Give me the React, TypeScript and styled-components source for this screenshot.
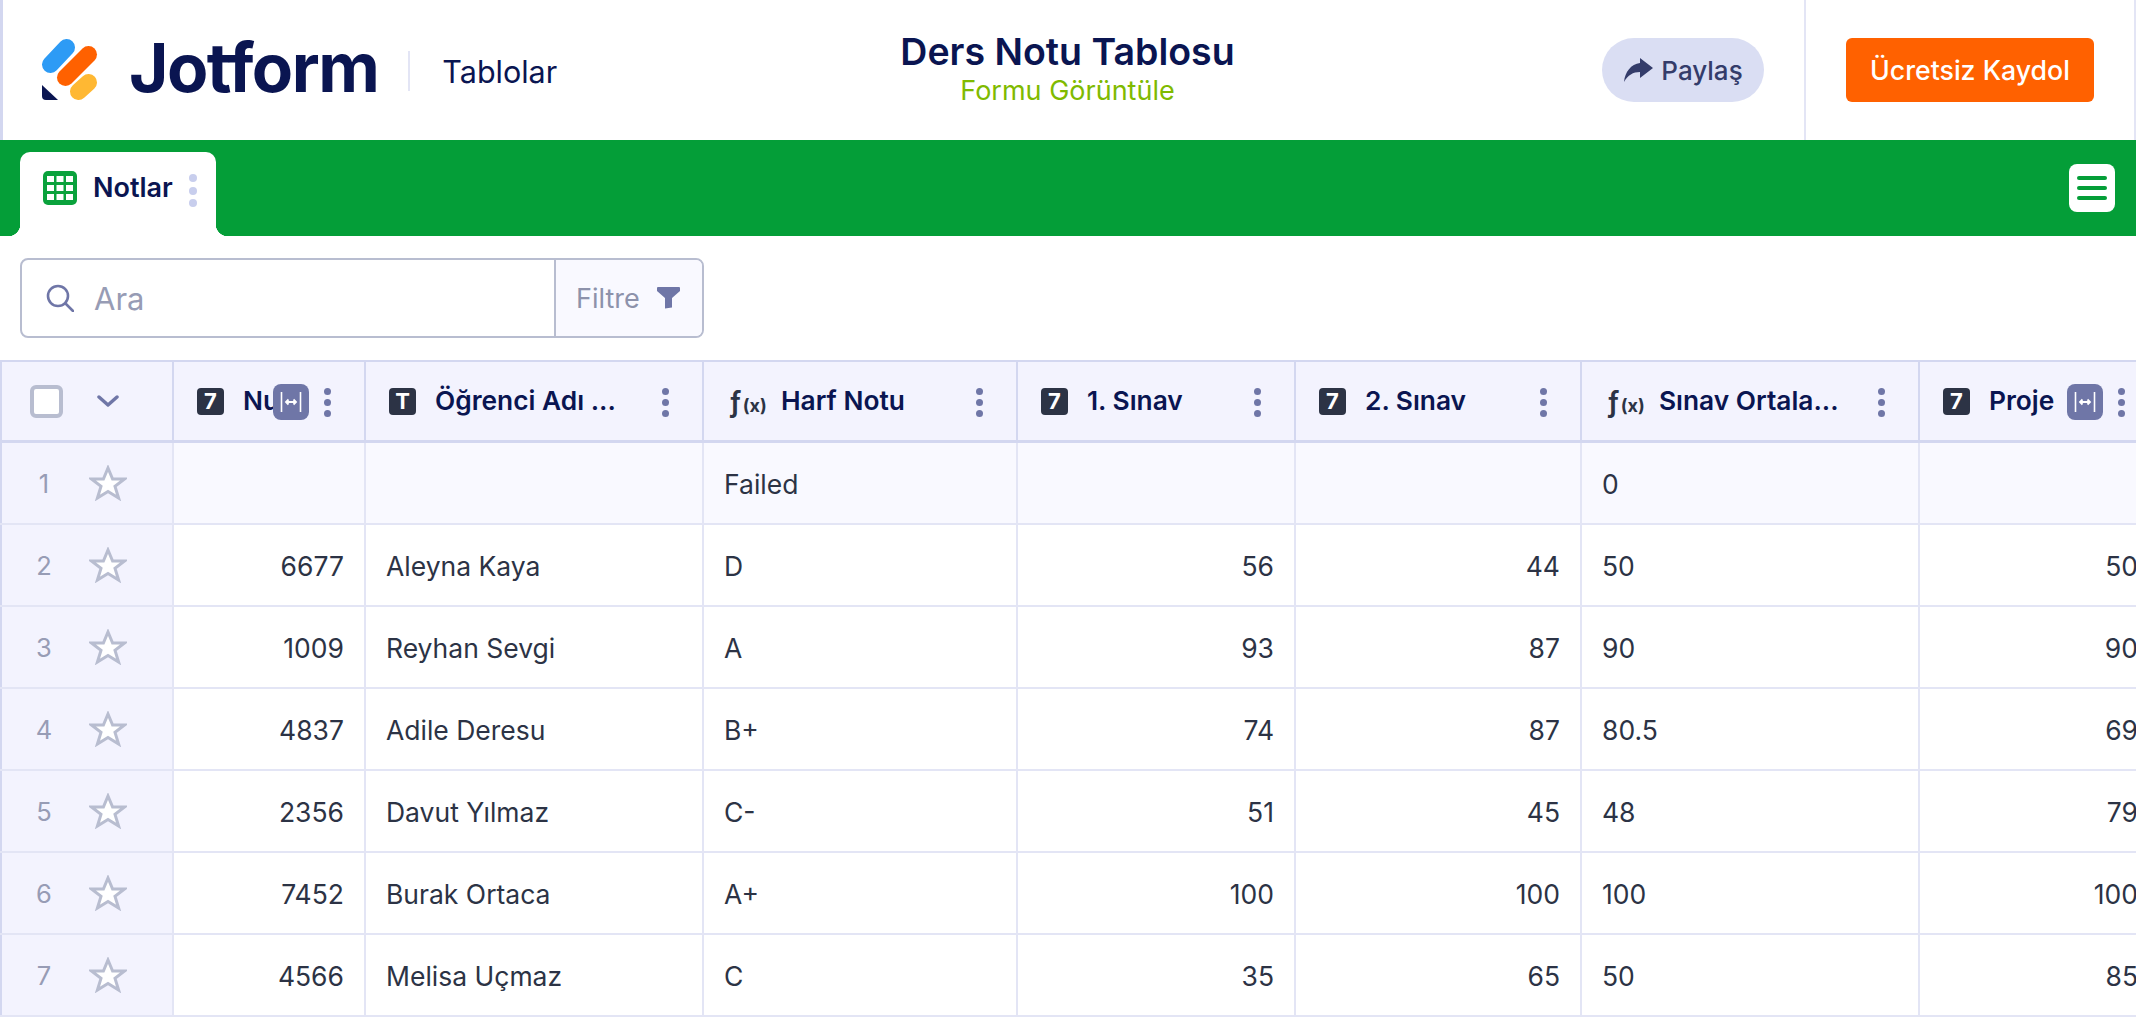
import React from 'react';
import styled, { createGlobalStyle } from 'styled-components';

const GlobalStyle = createGlobalStyle`
	html, body {
		margin: 0;
		padding: 0;
		background: #fff;
		overflow: hidden;
	}
	* {
		box-sizing: border-box;
	}
	body {
		font-family: Inter, "Liberation Sans", sans-serif;
		color: #2c3345;
	}
`;

const Page = styled.div`
	width: 2136px;
	height: 1018px;
	overflow: hidden;
	display: flex;
	flex-direction: column;
`;

const Header = styled.header`
	height: 140px;
	display: grid;
	grid-template-columns: 1fr 1fr 1fr;
	align-items: center;
	border-left: 3px solid #d3d7f0;
	border-right: 2px solid #e3e5f5;
`;

const Brand = styled.div`
	display: flex;
	align-items: center;
	padding-left: 39px;
	white-space: nowrap;
`;

const Wordmark = styled.span`
	margin-left: 31px;
	font-size: 67.5px;
	font-weight: 700;
	letter-spacing: -1.5px;
	color: #0a1551;
	line-height: 1;
	margin-top: -4px;
`;

const BrandSep = styled.span`
	width: 2px;
	height: 40px;
	background: #e3e5f5;
	margin: 2px 32px 0 30px;
`;

const BrandSub = styled.span`
	font-size: 30.5px;
	color: #0a1551;
	margin-top: 3px;
`;

const TitleBox = styled.div`
	display: flex;
	flex-direction: column;
	align-items: center;
	margin-left: -2px;
	margin-top: -3px;
	white-space: nowrap;
`;

const Title = styled.div`
	font-size: 37.5px;
	font-weight: 600;
	color: #0a1551;
	line-height: 44px;
`;

const SubTitle = styled.div`
	font-size: 27px;
	color: #7fba00;
	line-height: 34px;
`;

const HeaderRight = styled.div`
	display: flex;
	justify-content: flex-end;
	align-items: stretch;
	height: 100%;
`;

const ShareWrap = styled.div`
	display: flex;
	align-items: center;
	padding-right: 40px;
	border-right: 2px solid #e3e5f5;
`;

const ShareButton = styled.div`
	width: 162px;
	height: 64px;
	border-radius: 32px;
	background: #dadef3;
	display: flex;
	align-items: center;
	justify-content: center;
	gap: 8px;
	font-size: 26px;
	font-weight: 500;
	color: #343c6a;
	white-space: nowrap;
`;

const SignupWrap = styled.div`
	display: flex;
	align-items: center;
	padding: 0 40px;
`;

const SignupButton = styled.div`
	width: 248px;
	height: 64px;
	border-radius: 6px;
	background: #ff6100;
	color: #fff;
	font-size: 26.7px;
	font-weight: 500;
	display: flex;
	align-items: center;
	justify-content: center;
	white-space: nowrap;
`;

const TabBar = styled.div`
	height: 96px;
	background: #049e38;
	display: flex;
	align-items: flex-end;
	justify-content: space-between;
	padding: 0 21px 0 20px;
`;

const Tab = styled.div`
	position: relative;
	width: 196px;
	height: 84px;
	background: #fff;
	border-radius: 10px 10px 0 0;
	display: flex;
	align-items: flex-start;
	padding: 19px 0 0 23px;

	&::before,
	&::after {
		content: '';
		position: absolute;
		bottom: 0;
		width: 12px;
		height: 12px;
		background: radial-gradient(circle at 0 0, #049e38 12px, #fff 12.5px);
	}
	&::before {
		left: -12px;
	}
	&::after {
		right: -12px;
		background: radial-gradient(circle at 100% 0, #049e38 12px, #fff 12.5px);
	}
`;

const TabLabel = styled.span`
	margin-left: 16px;
	font-size: 27px;
	font-weight: 600;
	color: #0a1551;
	line-height: 34px;
`;

const TabDots = styled.div`
	margin-left: 16px;
	padding-top: 3px;
	display: flex;
	flex-direction: column;
	gap: 4.5px;
`;

const Dot = styled.i<{ $color: string; $size: number }>`
	display: block;
	width: ${p => p.$size}px;
	height: ${p => p.$size}px;
	border-radius: 50%;
	background: ${p => p.$color};
`;

const MenuButton = styled.div`
	width: 46px;
	height: 48px;
	border-radius: 8px;
	background: #fff;
	margin-bottom: 24px;
	display: flex;
	flex-direction: column;
	align-items: center;
	justify-content: center;
	gap: 6px;

	span {
		width: 30px;
		height: 4px;
		border-radius: 2px;
		background: #049e38;
	}
`;

const Toolbar = styled.div`
	height: 124px;
	padding: 22px 20px;
`;

const SearchGroup = styled.div`
	width: 684px;
	height: 80px;
	display: flex;
	border: 2px solid #b8bdd0;
	border-radius: 8px;
	overflow: hidden;
`;

const SearchField = styled.div`
	flex: 1;
	display: flex;
	align-items: center;
	padding-left: 24px;
	gap: 20px;
	font-size: 31px;
	color: #979cb5;
`;

const FilterButton = styled.div`
	width: 148px;
	border-left: 2px solid #b8bdd0;
	background: #f9f9ff;
	display: flex;
	align-items: center;
	padding-left: 20px;
	gap: 17px;
	font-size: 27px;
	color: #8d92ab;
`;

const COLUMNS = '174px 192px 338px 314px 278px 286px 338px 240px';

const Table = styled.div`
	width: 2160px;
	border-top: 2px solid #d3d7f0;
`;

const HeadRow = styled.div`
	display: grid;
	grid-template-columns: ${COLUMNS};
	height: 81px;
	background: #f3f3fe;
	border-bottom: 3px solid #d3d7f0;
`;

const BodyRow = styled.div<{ $tinted?: boolean }>`
	display: grid;
	grid-template-columns: ${COLUMNS};
	height: 82px;
	background: ${p => (p.$tinted ? '#f9f9ff' : '#fff')};
	border-bottom: 2px solid #e3e5f5;
`;

const CornerCell = styled.div`
	display: flex;
	align-items: center;
	padding-left: 28px;
	border-left: 2px solid #d3d7f0;
	border-right: 2px solid #d3d7f0;
`;

const CheckBox = styled.div`
	width: 33px;
	height: 33px;
	border: 4px solid #b8bdd0;
	border-radius: 6px;
	background: #fff;
	margin-right: 34px;
`;

const HeadCell = styled.div`
	position: relative;
	display: flex;
	align-items: center;
	padding-left: 23px;
	border-right: 2px solid #d3d7f0;
	min-width: 0;
`;

const TypeBadge = styled.span`
	width: 27px;
	height: 27px;
	border-radius: 4px;
	background: #2c3345;
	color: #fff;
	font-size: 22px;
	font-weight: 700;
	display: flex;
	align-items: center;
	justify-content: center;
`;

const FxIcon = styled.span`
	font-size: 29px;
	font-weight: 600;
	color: #2c3345;
	line-height: 1;
	white-space: nowrap;
	margin-left: 2px;

	small {
		font-weight: 700;
		font-size: 18px;
		margin-left: 1px;
	}
`;

const HeadTitle = styled.span<{ $left: number; $clip?: number }>`
	position: absolute;
	left: ${p => p.$left}px;
	top: 22px;
	display: block;
	font-size: 26.3px;
	font-weight: 600;
	color: #0a1551;
	white-space: nowrap;
	overflow: hidden;
	line-height: 34px;
	max-width: ${p => (p.$clip ? `${p.$clip}px` : 'none')};
`;

const Kebab = styled.div`
	position: absolute;
	right: 33px;
	top: 26px;
	display: flex;
	flex-direction: column;
	gap: 4px;
`;

const ResizeHandle = styled.div<{ $right: number }>`
	position: absolute;
	top: 22px;
	right: ${p => p.$right}px;
	width: 36px;
	height: 36px;
	border-radius: 8px;
	background: #6f76a7;
	display: flex;
	align-items: center;
	justify-content: center;
`;

const RowHead = styled.div`
	display: flex;
	align-items: center;
	background: #f3f3fe;
	border-left: 2px solid #d3d7f0;
	border-right: 2px solid #e3e5f5;
`;

const RowNumber = styled.span`
	width: 84px;
	text-align: center;
	font-size: 25.5px;
	color: #979cb5;
	margin-right: 3px;
`;

const Cell = styled.div<{ $number?: boolean }>`
	display: flex;
	align-items: center;
	justify-content: ${p => (p.$number ? 'flex-end' : 'flex-start')};
	padding: 2px 20px 0;
	font-size: 26.5px;
	color: #2c3345;
	border-right: 2px solid #e3e5f5;
	white-space: nowrap;
`;

const Logo = () => (
	<svg width="56" height="62" viewBox="42 33 56 62">
		<line x1="50.5" y1="58.5" x2="66.5" y2="41.5" stroke="#2d9bf5" strokeWidth="17" strokeLinecap="round" />
		<line x1="65.5" y1="71.5" x2="88.5" y2="48.5" stroke="#ff6100" strokeWidth="17" strokeLinecap="round" />
		<line x1="78.5" y1="85.5" x2="88.5" y2="76.5" stroke="#ffb833" strokeWidth="17" strokeLinecap="round" />
		<path d="M42 79 L58 94 H46 Q42 94 42 90 Z" fill="#0a1551" />
	</svg>
);

const GridIcon = () => (
	<svg width="34" height="34" viewBox="0 0 34 34">
		<rect width="34" height="34" rx="5" fill="#0aa23c" />
		<path
			d="M4 5H11V11H4ZM13.5 5H20.5V11H13.5ZM23 5H30V11H23ZM4 14H11V20H4ZM13.5 14H20.5V20H13.5ZM23 14H30V20H23ZM4 23H11V29H4ZM13.5 23H20.5V29H13.5ZM23 23H30V29H23Z"
			fill="#fff"
		/>
	</svg>
);

const ShareIcon = () => (
	<svg width="30" height="26" viewBox="0 0 30 26">
		<path d="M17 1 L30 11 L17 21 V15 C10 15 5 18 1 25 C2 15 8 7 17 6 Z" fill="#343c6a" />
	</svg>
);

const SearchIcon = () => (
	<svg width="28" height="28" viewBox="0 0 28 28" fill="none" stroke="#6f76a7" strokeWidth="2.6">
		<circle cx="12" cy="12" r="10" />
		<path d="M19.5 19.5L27 27" strokeLinecap="round" />
	</svg>
);

const FunnelIcon = () => (
	<svg width="23" height="22" viewBox="0 0 23 22">
		<path d="M1 0H22Q23 0 23 1V4L15 11V20.5L8 21.5V11L0 4V1Q0 0 1 0Z" fill="#6f76a7" />
	</svg>
);

const Chevron = () => (
	<svg width="22" height="12" viewBox="0 0 22 12" fill="none">
		<path d="M2 2L11 10L20 2" stroke="#6f76a7" strokeWidth="3.4" strokeLinecap="round" strokeLinejoin="round" />
	</svg>
);

const Star = () => (
	<svg width="38" height="36" viewBox="0 0 38 36">
		<path
			d="M19 3L23.6 14H35.5L26 21.4L29.6 33L19 26.4L8.4 33L12 21.4L2.5 14H14.4Z"
			fill="#fff"
			stroke="#b8bdd0"
			strokeWidth="3"
		/>
	</svg>
);

const ResizeGlyph = () => (
	<svg width="22" height="22" viewBox="0 0 22 22" fill="none" stroke="#fff">
		<path d="M1.5 1V21M20.5 1V21" strokeWidth="1.6" />
		<path d="M6.5 11H15.5M8.5 8.5L6 11L8.5 13.5M13.5 8.5L16 11L13.5 13.5" strokeWidth="1.8" />
	</svg>
);

const KebabDots = () => (
	<Kebab>
		<Dot $color="#6f76a7" $size={7} />
		<Dot $color="#6f76a7" $size={7} />
		<Dot $color="#6f76a7" $size={7} />
	</Kebab>
);

type Column = {
	title: string;
	kind: 'number' | 'text' | 'formula';
	clip?: number;
	handleRight?: number;
};

const columns: Column[] = [
	{ title: 'Numara', kind: 'number', clip: 60, handleRight: 55 },
	{ title: 'Öğrenci Adı ...', kind: 'text' },
	{ title: 'Harf Notu', kind: 'formula' },
	{ title: '1. Sınav', kind: 'number' },
	{ title: '2. Sınav', kind: 'number' },
	{ title: 'Sınav Ortala...', kind: 'formula' },
	{ title: 'Proje', kind: 'number', handleRight: 55 },
];

const rows: string[][] = [
	['', '', 'Failed', '', '', '0', ''],
	['6677', 'Aleyna Kaya', 'D', '56', '44', '50', '50'],
	['1009', 'Reyhan Sevgi', 'A', '93', '87', '90', '90'],
	['4837', 'Adile Deresu', 'B+', '74', '87', '80.5', '69'],
	['2356', 'Davut Yılmaz', 'C-', '51', '45', '48', '79'],
	['7452', 'Burak Ortaca', 'A+', '100', '100', '100', '100'],
	['4566', 'Melisa Uçmaz', 'C', '35', '65', '50', '85'],
];

export default function App() {
	return (
		<Page>
			<GlobalStyle />
			<Header>
				<Brand>
					<Logo />
					<Wordmark>Jotform</Wordmark>
					<BrandSep />
					<BrandSub>Tablolar</BrandSub>
				</Brand>
				<TitleBox>
					<Title>Ders Notu Tablosu</Title>
					<SubTitle>Formu Görüntüle</SubTitle>
				</TitleBox>
				<HeaderRight>
					<ShareWrap>
						<ShareButton>
							<ShareIcon />
							Paylaş
						</ShareButton>
					</ShareWrap>
					<SignupWrap>
						<SignupButton>Ücretsiz Kaydol</SignupButton>
					</SignupWrap>
				</HeaderRight>
			</Header>

			<TabBar>
				<Tab>
					<GridIcon />
					<TabLabel>Notlar</TabLabel>
					<TabDots>
						<Dot $color="#c8ceed" $size={8} />
						<Dot $color="#c8ceed" $size={8} />
						<Dot $color="#c8ceed" $size={8} />
					</TabDots>
				</Tab>
				<MenuButton>
					<span />
					<span />
					<span />
				</MenuButton>
			</TabBar>

			<Toolbar>
				<SearchGroup>
					<SearchField>
						<SearchIcon />
						Ara
					</SearchField>
					<FilterButton>
						Filtre
						<FunnelIcon />
					</FilterButton>
				</SearchGroup>
			</Toolbar>

			<Table>
				<HeadRow>
					<CornerCell>
						<CheckBox />
						<Chevron />
					</CornerCell>
					{columns.map(col => (
						<HeadCell key={col.title}>
							{col.kind === 'number' && <TypeBadge>7</TypeBadge>}
							{col.kind === 'text' && <TypeBadge>T</TypeBadge>}
							{col.kind === 'formula' && (
								<FxIcon>
									ƒ<small>(x)</small>
								</FxIcon>
							)}
							<HeadTitle $left={col.kind === 'formula' ? 77 : 69} $clip={col.clip}>
								{col.title}
							</HeadTitle>
							{col.handleRight && (
								<ResizeHandle $right={col.handleRight}>
									<ResizeGlyph />
								</ResizeHandle>
							)}
							<KebabDots />
						</HeadCell>
					))}
				</HeadRow>
				{rows.map((row, i) => (
					<BodyRow key={i} $tinted={i === 0}>
						<RowHead>
							<RowNumber>{i + 1}</RowNumber>
							<Star />
						</RowHead>
						{row.map((value, c) => (
							<Cell key={c} $number={columns[c].kind === 'number'}>
								{value}
							</Cell>
						))}
					</BodyRow>
				))}
			</Table>
		</Page>
	);
}
